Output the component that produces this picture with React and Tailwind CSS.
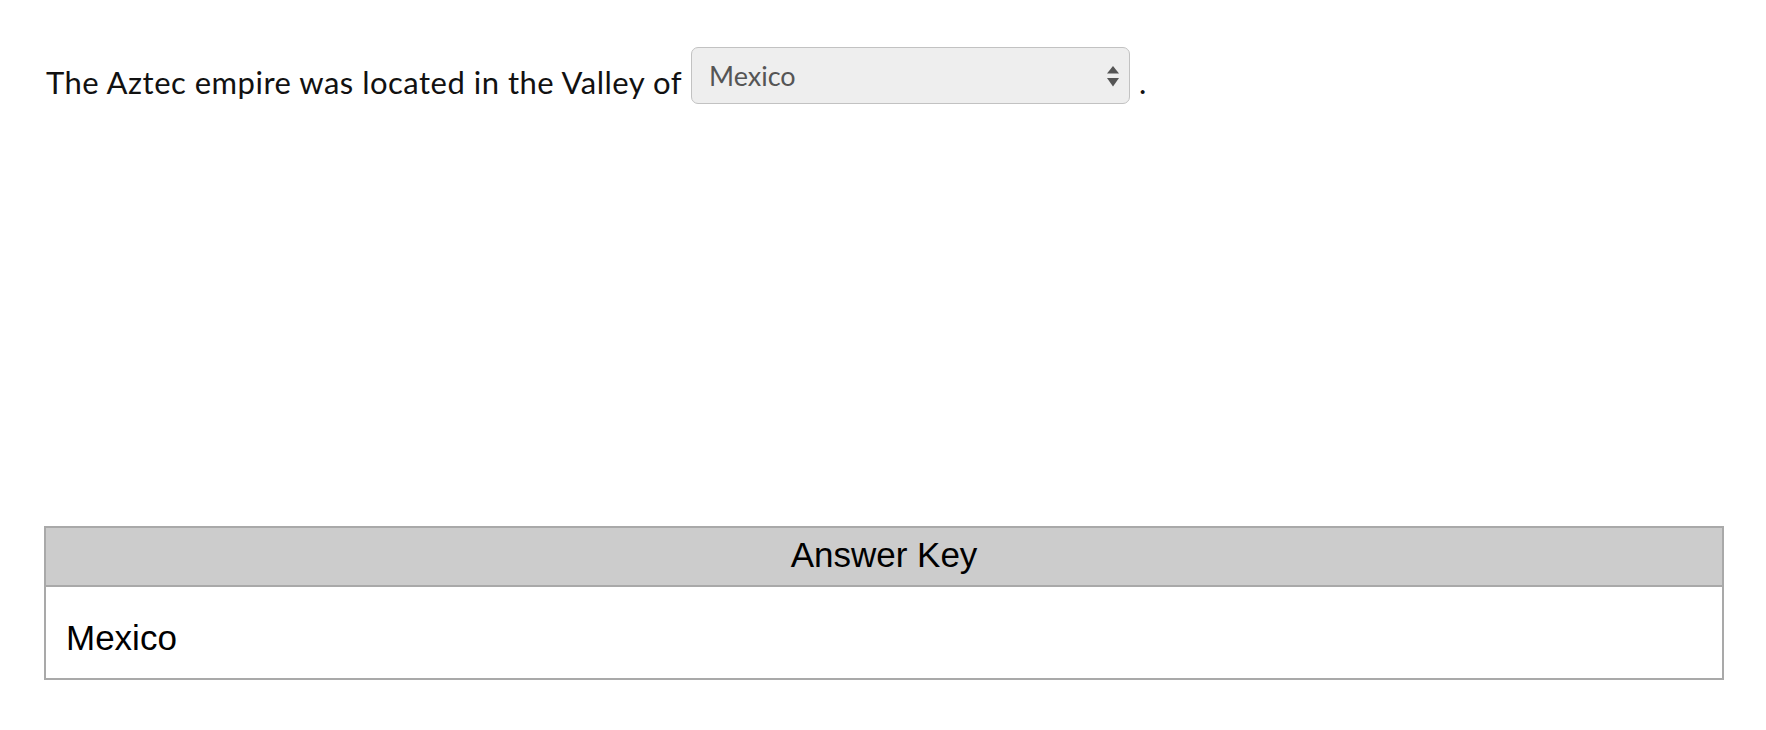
export default function App() {
  return (
    <div className="min-h-screen bg-white pl-[44px] pr-[42px] pt-[47px]">
      {/* question line */}
      <div className="flex items-start font-['Lato',sans-serif] text-[31px] leading-[36px] tracking-[0.5px] text-[#111]">
        <span className="mt-[17px] pl-[2px]">The Aztec empire was located in the Valley of</span>
        <div className="ml-[9px] flex h-[57px] w-[439px] items-center justify-between rounded-[7px] border border-[#c2c2c2] bg-[#eeeeee] pl-[17px] pr-[10px] tracking-normal">
          <span className="text-[27px] leading-[27px] text-[#555]">Mexico</span>
          <svg width="12" height="21" viewBox="0 0 12 21" className="mt-[2px]">
            <path d="M6 0 L12 7.5 L0 7.5 Z" fill="#555" />
            <path d="M0 12 L12 12 L6 20.5 Z" fill="#555" />
          </svg>
        </div>
        <span className="mt-[17px] ml-[9px]">.</span>
      </div>

      {/* answer key */}
      <div className="mt-[422px] border-2 border-[#a9a9a9] font-['Liberation_Sans',Arial,sans-serif] text-[35px] leading-[35px] text-black">
        <div className="border-b-2 border-[#a9a9a9] bg-[#cccccc] pt-[9px] pb-[13px] text-center">
          Answer Key
        </div>
        <div className="pl-[20px] pt-[33px] pb-[23px]">Mexico</div>
      </div>
    </div>
  );
}
